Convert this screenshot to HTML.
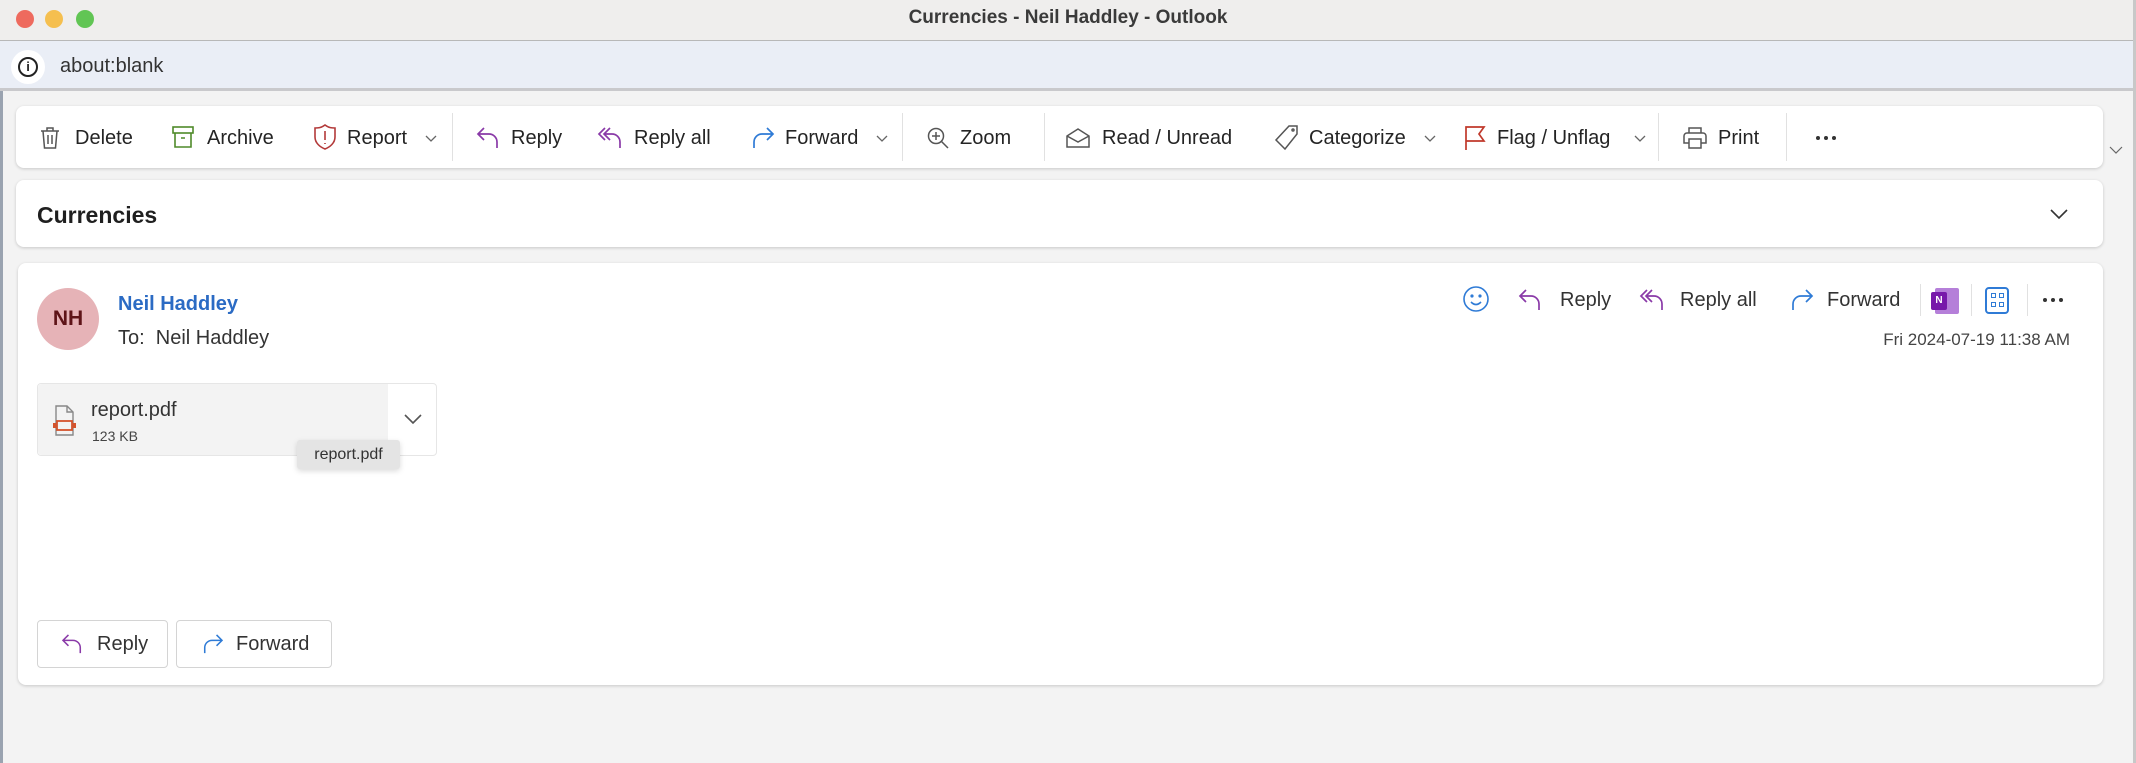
<!DOCTYPE html>
<html><head><meta charset="utf-8">
<style>
*{box-sizing:border-box;margin:0;padding:0}
body{width:2136px;height:763px;overflow:hidden;background:#f3f3f3;font-family:"Liberation Sans",sans-serif;color:#242424;position:relative}
.a{position:absolute}
.t{position:absolute;font-size:20px;line-height:24px;white-space:nowrap}
svg{position:absolute;overflow:visible}
.card{position:absolute;background:#fff;border-radius:8px;box-shadow:0 1px 3px rgba(0,0,0,.18)}
.sep{position:absolute;width:1px;background:#e1e1e1}
</style></head><body>
<div class="a" style="left:0;top:0;width:2136px;height:41px;background:#efeeed;border-bottom:1px solid #b8b8b8"></div>
<div class="a" style="left:16px;top:10px;width:18px;height:18px;border-radius:50%;background:#ee6a5e"></div>
<div class="a" style="left:45px;top:10px;width:18px;height:18px;border-radius:50%;background:#f5bf4f"></div>
<div class="a" style="left:76px;top:10px;width:18px;height:18px;border-radius:50%;background:#61c554"></div>
<div class="t" style="left:0;width:2136px;text-align:center;top:6px;font-size:19px;font-weight:bold;color:#3a3a3a">Currencies - Neil Haddley - Outlook</div>
<div class="a" style="left:0;top:41px;width:2136px;height:50px;background:#eaeef6;border-bottom:3px solid #c9c9cc"></div>
<div class="a" style="left:11px;top:50px;width:34px;height:34px;border-radius:50%;background:#fff"></div>
<div class="a" style="left:18px;top:57px;width:20px;height:20px;border-radius:50%;border:2px solid #222;font-size:13px;font-weight:bold;text-align:center;line-height:16px">i</div>
<div class="t" style="left:60px;top:54px;color:#333">about:blank</div>
<div class="a" style="left:0;top:91px;width:3px;height:672px;background:#9aa3b0"></div>
<div class="a" style="left:2133px;top:0;width:3px;height:763px;background:#c8c8c8"></div>

<div class="card" style="left:16px;top:106px;width:2087px;height:62px"></div>
<svg style="left:40px;top:126px" width="20" height="24" viewBox="0 0 20 24" fill="none" stroke="#555" stroke-width="1.5"><path d="M1 5h18M7 5V2h6v3M3 5l1.5 17h11L17 5M8 9v9M12 9v9"/></svg>
<div class="t" style="left:75px;top:126px">Delete</div>
<svg style="left:172px;top:126px" width="22" height="22" viewBox="0 0 22 22" fill="none" stroke="#4f8a2a" stroke-width="1.6"><rect x="1" y="1" width="20" height="6"/><path d="M3 7v14h16V7M9 12h4"/></svg>
<div class="t" style="left:207px;top:126px">Archive</div>
<svg style="left:314px;top:124px" width="22" height="26" viewBox="0 0 22 26" fill="none" stroke="#b33a3a" stroke-width="1.6"><path d="M11 1C7 4 4 4 1 4v9c0 6 5 10 10 12 5-2 10-6 10-12V4c-3 0-6 0-10-3z"/><path d="M11 7v9M11 19v1"/></svg>
<div class="t" style="left:347px;top:126px">Report</div>
<svg style="left:425px;top:135px" width="12" height="7" fill="none" stroke="#666" stroke-width="1.3"><path d="M1 1l5 5 5-5"/></svg>
<div class="sep" style="left:452px;top:113px;height:48px"></div>
<svg style="left:476px;top:127px" width="26" height="22" viewBox="0 0 26 22" fill="none" stroke="#8a3aa8" stroke-width="1.7"><path d="M8 1L2 7l6 6M2 7h11a8 8 0 0 1 8 8v6"/></svg>
<div class="t" style="left:511px;top:126px">Reply</div>
<svg style="left:597px;top:127px" width="28" height="22" viewBox="0 0 28 22" fill="none" stroke="#8a3aa8" stroke-width="1.7"><path d="M8 1L2 7l6 6M13 1L7 7l6 6M7 7h8a8 8 0 0 1 8 8v6"/></svg>
<div class="t" style="left:634px;top:126px">Reply all</div>
<svg style="left:749px;top:127px" width="26" height="22" viewBox="0 0 26 22" fill="none" stroke="#2f7bd6" stroke-width="1.7"><path d="M18 1l6 6-6 6M24 7H13a8 8 0 0 0-8 8v6"/></svg>
<div class="t" style="left:785px;top:126px">Forward</div>
<svg style="left:876px;top:135px" width="12" height="7" fill="none" stroke="#666" stroke-width="1.3"><path d="M1 1l5 5 5-5"/></svg>
<div class="sep" style="left:902px;top:113px;height:48px"></div>
<svg style="left:927px;top:127px" width="22" height="22" fill="none" stroke="#555" stroke-width="1.5"><circle cx="9" cy="9" r="7.5"/><path d="M14.5 14.5L21 21M9 5v8M5 9h8"/></svg>
<div class="t" style="left:960px;top:126px">Zoom</div>
<div class="sep" style="left:1044px;top:113px;height:48px"></div>
<svg style="left:1066px;top:128px" width="24" height="20" fill="none" stroke="#555" stroke-width="1.5"><path d="M1 8l11-7 11 7v11H1zM1 8l11 6 11-6"/></svg>
<div class="t" style="left:1102px;top:126px">Read / Unread</div>
<svg style="left:1275px;top:125px" width="24" height="26" fill="none" stroke="#555" stroke-width="1.5"><path d="M14 1h8v8L10 24 1 15z"/><circle cx="18" cy="5" r="1"/></svg>
<div class="t" style="left:1309px;top:126px">Categorize</div>
<svg style="left:1424px;top:135px" width="12" height="7" fill="none" stroke="#666" stroke-width="1.3"><path d="M1 1l5 5 5-5"/></svg>
<svg style="left:1464px;top:125px" width="22" height="26" fill="none" stroke="#c0392b" stroke-width="1.7"><path d="M2 25V2h18l-5 7 5 7H2"/></svg>
<div class="t" style="left:1497px;top:126px">Flag / Unflag</div>
<svg style="left:1634px;top:135px" width="12" height="7" fill="none" stroke="#666" stroke-width="1.3"><path d="M1 1l5 5 5-5"/></svg>
<div class="sep" style="left:1658px;top:113px;height:48px"></div>
<svg style="left:1683px;top:126px" width="24" height="24" fill="none" stroke="#555" stroke-width="1.5"><path d="M6 7V2h12v5M4 7h16a3 3 0 0 1 3 3v7h-5M6 17H1v-7a3 3 0 0 1 3-3M6 13h12v9H6z"/></svg>
<div class="t" style="left:1718px;top:126px">Print</div>
<div class="sep" style="left:1786px;top:113px;height:48px"></div>
<div class="a" style="left:1816px;top:136px;width:4px;height:4px;border-radius:50%;background:#333"></div>
<div class="a" style="left:1824px;top:136px;width:4px;height:4px;border-radius:50%;background:#333"></div>
<div class="a" style="left:1832px;top:136px;width:4px;height:4px;border-radius:50%;background:#333"></div>
<svg style="left:2109px;top:146px" width="14" height="8" fill="none" stroke="#666" stroke-width="1.2"><path d="M1 1l6 6 6-6"/></svg>

<div class="card" style="left:16px;top:180px;width:2087px;height:67px"></div>
<div class="t" style="left:37px;top:203px;font-size:23px;font-weight:bold;color:#1f1f1f">Currencies</div>
<svg style="left:2050px;top:209px" width="18" height="10" fill="none" stroke="#333" stroke-width="1.6"><path d="M1 1l8 8 8-8"/></svg>

<div class="card" style="left:18px;top:263px;width:2085px;height:422px"></div>
<div class="a" style="left:37px;top:288px;width:62px;height:62px;border-radius:50%;background:#e6b3b7;color:#5e1418;font-size:21px;font-weight:bold;line-height:62px;text-align:center">NH</div>
<div class="t" style="left:118px;top:292px;color:#2b6bc4;font-weight:bold">Neil Haddley</div>
<div class="t" style="left:118px;top:326px;color:#333">To:&nbsp; Neil Haddley</div>
<svg style="left:1463px;top:286px" width="26" height="26" fill="none" stroke="#2f7bd6" stroke-width="1.6"><circle cx="13" cy="13" r="12"/><circle cx="9" cy="10" r=".8" fill="#2f7bd6"/><circle cx="17" cy="10" r=".8" fill="#2f7bd6"/><path d="M8 16q5 5 10 0"/></svg>
<svg style="left:1518px;top:289px" width="26" height="22" viewBox="0 0 26 22" fill="none" stroke="#8a3aa8" stroke-width="1.7"><path d="M8 1L2 7l6 6M2 7h11a8 8 0 0 1 8 8v6"/></svg>
<div class="t" style="left:1560px;top:288px;color:#333">Reply</div>
<svg style="left:1639px;top:289px" width="28" height="22" viewBox="0 0 28 22" fill="none" stroke="#8a3aa8" stroke-width="1.7"><path d="M8 1L2 7l6 6M13 1L7 7l6 6M7 7h8a8 8 0 0 1 8 8v6"/></svg>
<div class="t" style="left:1680px;top:288px;color:#333">Reply all</div>
<svg style="left:1788px;top:289px" width="26" height="22" viewBox="0 0 26 22" fill="none" stroke="#2f7bd6" stroke-width="1.7"><path d="M18 1l6 6-6 6M24 7H13a8 8 0 0 0-8 8v6"/></svg>
<div class="t" style="left:1827px;top:288px;color:#333">Forward</div>
<div class="sep" style="left:1920px;top:284px;height:32px"></div>
<div class="a" style="left:1935px;top:288px;width:24px;height:26px;background:#b57fd9;border-radius:2px"></div>
<div class="a" style="left:1931px;top:292px;width:16px;height:18px;background:#7719aa;color:#fff;font-size:10px;font-weight:bold;text-align:center;line-height:18px;border-radius:2px">N</div>
<div class="sep" style="left:1971px;top:284px;height:32px"></div>
<div class="a" style="left:1985px;top:287px;width:24px;height:27px;border:2px solid #2f7bd6;border-radius:4px"></div>
<div class="a" style="left:1991px;top:293px;width:5px;height:5px;border:1.5px solid #2f7bd6"></div>
<div class="a" style="left:1999px;top:293px;width:5px;height:5px;border:1.5px solid #2f7bd6"></div>
<div class="a" style="left:1991px;top:302px;width:5px;height:5px;border:1.5px solid #2f7bd6"></div>
<div class="a" style="left:1999px;top:302px;width:5px;height:5px;border:1.5px solid #2f7bd6"></div>
<div class="sep" style="left:2027px;top:284px;height:32px"></div>
<div class="a" style="left:2043px;top:298px;width:4px;height:4px;border-radius:50%;background:#333"></div>
<div class="a" style="left:2051px;top:298px;width:4px;height:4px;border-radius:50%;background:#333"></div>
<div class="a" style="left:2059px;top:298px;width:4px;height:4px;border-radius:50%;background:#333"></div>
<div class="t" style="left:0;width:2070px;text-align:right;top:328px;font-size:17px;color:#444">Fri 2024-07-19 11:38 AM</div>

<div class="a" style="left:37px;top:383px;width:400px;height:73px;border:1px solid #e6e6e6;border-radius:4px;background:#fff"></div>
<div class="a" style="left:38px;top:384px;width:350px;height:71px;background:#f3f3f3;border-radius:4px 0 0 4px"></div>
<svg style="left:52px;top:405px" width="26" height="32" fill="none" stroke-width="1.4"><path d="M4 1h11l6 6v23H4z" stroke="#888"/><path d="M15 1v6h6" stroke="#888"/><rect x="5" y="16" width="15" height="9" stroke="#d4532c" stroke-width="1.8"/><rect x="1" y="18" width="3" height="5" fill="#d4532c" stroke="none"/><rect x="21" y="18" width="3" height="5" fill="#d4532c" stroke="none"/></svg>
<div class="t" style="left:91px;top:398px;font-size:20px;color:#333">report.pdf</div>
<div class="t" style="left:92px;top:427px;font-size:14px;color:#444;line-height:18px">123 KB</div>
<svg style="left:404px;top:414px" width="18" height="10" fill="none" stroke="#555" stroke-width="1.6"><path d="M1 1l8 8 8-8"/></svg>
<div class="a" style="left:297px;top:440px;width:103px;height:29px;background:#e4e4e4;border-radius:3px;box-shadow:0 2px 6px rgba(0,0,0,.15);font-size:16px;line-height:29px;text-align:center;color:#333">report.pdf</div>

<div class="a" style="left:37px;top:620px;width:131px;height:48px;border:1px solid #d4d4d4;border-radius:4px;background:#fff"></div>
<svg style="left:60px;top:634px" width="26" height="20" viewBox="0 0 26 22" fill="none" stroke="#8a3aa8" stroke-width="1.7"><path d="M8 1L2 7l6 6M2 7h11a8 8 0 0 1 8 8v6"/></svg>
<div class="t" style="left:97px;top:632px;color:#333">Reply</div>
<div class="a" style="left:176px;top:620px;width:156px;height:48px;border:1px solid #d4d4d4;border-radius:4px;background:#fff"></div>
<svg style="left:199px;top:634px" width="26" height="20" viewBox="0 0 26 22" fill="none" stroke="#2f7bd6" stroke-width="1.7"><path d="M18 1l6 6-6 6M24 7H13a8 8 0 0 0-8 8v6"/></svg>
<div class="t" style="left:236px;top:632px;color:#333">Forward</div>
</body></html>
